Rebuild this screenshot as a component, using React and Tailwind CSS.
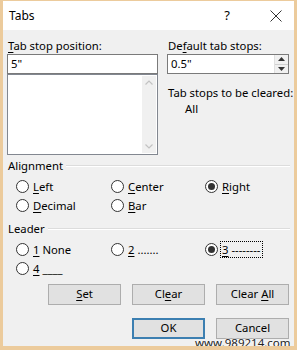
import React from "react";

const U = ({ children }) => <span className="underline underline-offset-2 decoration-1">{children}</span>;

function Radio({ checked, children, focus }) {
  return (
    <div className="flex items-center h-[19px]">
      <div className="w-[13px] h-[13px] rounded-full border border-[#333333] bg-white flex items-center justify-center shrink-0">
        {checked && <div className="w-[7px] h-[7px] rounded-full bg-[#333333]" />}
      </div>
      <div className={"ml-[3px] px-[1px] leading-[15px] whitespace-nowrap " + (focus ? "outline outline-1 outline-dotted outline-[#000]" : "")}>{children}</div>
    </div>
  );
}

function Btn({ children, def }) {
  return (
    <div
      className={
        "w-[73px] h-[21px] flex items-center justify-center bg-[#e1e1e1] " +
        (def ? "border-2 border-[#3c7fb1]" : "border border-[#adadad]")
      }
    >
      <span className="whitespace-pre">{children}</span>
    </div>
  );
}

function Section({ label }) {
  return (
    <div className="flex items-center h-[16px] pl-[5px] pr-[4px]">
      <span>{label}</span>
      <div className="flex-1 ml-[3px] border-t border-[#dcdcdc] border-b-white border-b" />
    </div>
  );
}

export default function App() {
  return (
    <div
      className="relative w-[297px] h-[350px] flex flex-col bg-[#f0f0f0] border-x-[3px] border-b-[4px] border-t border-[#eccb9c] text-[11.3px] text-black overflow-hidden"
      style={{ fontFamily: '"Noto Sans", "Open Sans", sans-serif' }}
    >
      <div className="h-[29px] bg-white flex items-center shrink-0">
        <span className="ml-[6px] text-[12px]">Tabs</span>
        <span className="ml-auto mr-[40px] text-[13px]">?</span>
        <svg width="12" height="12" viewBox="0 0 12 12" className="mr-[12px]">
          <path d="M0.5 0.5 L11.5 11.5 M11.5 0.5 L0.5 11.5" stroke="#333" strokeWidth="1" />
        </svg>
      </div>

      <div className="flex flex-col flex-1">
        {/* top section */}
        <div className="flex pt-[8px] pl-[4px]">
          <div className="w-[151px] flex flex-col">
            <div className="h-[16px] leading-[16px] pl-[1px] whitespace-nowrap">
              <U>T</U>ab stop position:
            </div>
            <div className="h-[20px] border border-[#7a7a7a] bg-white flex items-center pl-[3px]">5"</div>
            <div className="h-[81px] border border-[#828790] bg-white flex justify-end p-[1px]">
              <div className="w-[14px] h-full bg-[#f0f0f0] flex flex-col items-center justify-between py-[4px]">
                <svg width="8" height="5" viewBox="0 0 8 5"><path d="M0.5 4.5 L4 1 L7.5 4.5" stroke="#c2c2c2" fill="none" strokeWidth="1.2" /></svg>
                <svg width="8" height="5" viewBox="0 0 8 5"><path d="M0.5 0.5 L4 4 L7.5 0.5" stroke="#c2c2c2" fill="none" strokeWidth="1.2" /></svg>
              </div>
            </div>
          </div>
          <div className="w-[122px] ml-[9px] flex flex-col">
            <div className="h-[16px] leading-[16px] pl-[1px] whitespace-nowrap">
              De<U>f</U>ault tab stops:
            </div>
            <div className="h-[20px] border border-[#7a7a7a] bg-white flex items-center">
              <span className="pl-[3px] flex-1">0.5"</span>
              <div className="w-[14px] h-full flex flex-col border-l border-[#e0e0e0]">
                <div className="flex-1 flex items-center justify-center bg-[#f0f0f0] border-b border-[#d0d0d0]">
                  <svg width="7" height="4" viewBox="0 0 7 4"><path d="M0 4 L3.5 0 L7 4 Z" fill="#333" /></svg>
                </div>
                <div className="flex-1 flex items-center justify-center bg-[#f0f0f0]">
                  <svg width="7" height="4" viewBox="0 0 7 4"><path d="M0 0 L3.5 4 L7 0 Z" fill="#333" /></svg>
                </div>
              </div>
            </div>
            <div className="mt-[11px] leading-[16px] pl-[1px] whitespace-nowrap">Tab stops to be cleared:</div>
            <div className="leading-[16px] pl-[18px]">All</div>
          </div>
        </div>

        {/* Alignment */}
        <div className="mt-[3px]">
          <Section label="Alignment" />
          <div className="grid grid-cols-[95px_94px_auto] pl-[13px] mt-[3px]">
            <Radio><U>L</U>eft</Radio>
            <Radio><U>C</U>enter</Radio>
            <Radio checked><U>R</U>ight</Radio>
            <Radio><U>D</U>ecimal</Radio>
            <Radio><U>B</U>ar</Radio>
          </div>
        </div>

        {/* Leader */}
        <div className="mt-[6px]">
          <Section label="Leader" />
          <div className="grid grid-cols-[95px_94px_auto] pl-[13px] mt-[3px]">
            <Radio><U>1</U> None</Radio>
            <Radio><U>2</U> .......</Radio>
            <Radio checked focus><U>3</U> --------</Radio>
            <Radio><U>4</U> ____</Radio>
          </div>
        </div>

        {/* Buttons */}
        <div className="flex justify-end gap-[11px] pr-[5px] mt-[6px]">
          <Btn><U>S</U>et</Btn>
          <Btn>Cl<U>e</U>ar</Btn>
          <Btn>Clear <U>A</U>ll</Btn>
        </div>
        <div className="flex justify-end gap-[11px] pr-[5px] mt-[13px]">
          <Btn def>OK</Btn>
          <Btn>Cancel</Btn>
        </div>
      </div>

      <div
        className="absolute left-[192px] top-[336px] text-[11.5px] leading-[12px] text-[#222]"
        style={{ textShadow: "0 0 2px #fff, 0 0 2px #fff" }}
      >
        www.989214.com
      </div>
    </div>
  );
}
